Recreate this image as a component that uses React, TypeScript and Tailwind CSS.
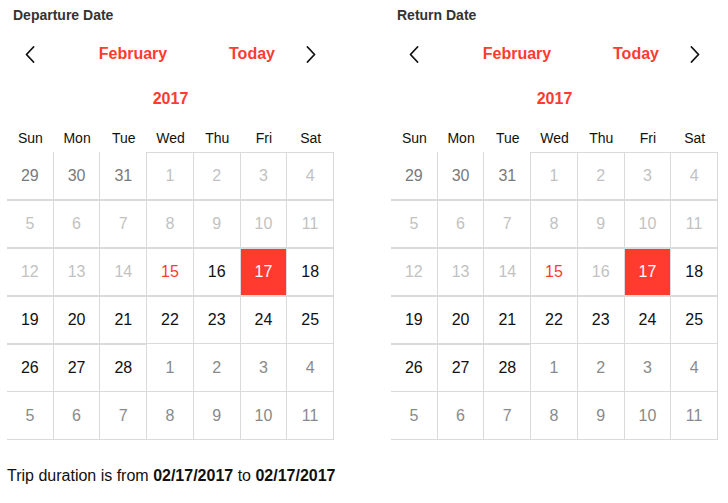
import React from "react";

type Day = { n: number; tone: "prev" | "off" | "on" | "today" | "sel" | "next" };

const toneClass: Record<Day["tone"], string> = {
  prev: "text-[#7a7a7a]",
  off: "text-[#c2c2c2]",
  on: "text-[#111]",
  today: "text-[#ff3b30]",
  sel: "bg-[#ff3b30] text-white",
  next: "text-[#8a8a8a]",
};

const buildDays = (disableSixteen: boolean): Day[] => {
  const days: Day[] = [];
  [29, 30, 31].forEach((n) => days.push({ n, tone: "prev" }));
  for (let n = 1; n <= 28; n++) {
    let tone: Day["tone"] = "on";
    if (n < 15) tone = "off";
    if (n === 15) tone = "today";
    if (n === 16 && disableSixteen) tone = "off";
    if (n === 17) tone = "sel";
    days.push({ n, tone });
  }
  for (let n = 1; n <= 11; n++) days.push({ n, tone: "next" });
  return days;
};

// which cells carry a top border (gives the doubled lines of the original table)
const hasTop = (i: number) => {
  const row = Math.floor(i / 7);
  const col = i % 7;
  if (row === 0) return col >= 3;
  if (row >= 1 && row <= 3) return true;
  if (row === 4) return col <= 2;
  return false;
};

const Chevron = ({ dir }: { dir: "left" | "right" }) => (
  <svg width="10" height="17" viewBox="0 0 10 17" fill="none">
    <polyline
      points={dir === "left" ? "8.5,1 1.5,8.5 8.5,16" : "1.5,1 8.5,8.5 1.5,16"}
      stroke="#111"
      strokeWidth="1.8"
      strokeLinecap="round"
      strokeLinejoin="round"
    />
  </svg>
);

const Calendar = ({ title, disableSixteen }: { title: string; disableSixteen: boolean }) => {
  const days = buildDays(disableSixteen);
  return (
    <div className="w-[327px]">
      <div className="h-[30px] flex items-center pl-[6px] text-[14px] font-bold text-[#333]">{title}</div>
      <div className="mt-[2px] h-[44px] flex items-center">
        <div className="w-[46px] shrink-0 flex justify-center">
          <Chevron dir="left" />
        </div>
        <div className="w-[160px] shrink-0 text-center text-[16px] font-bold text-[#ff3b30]">February</div>
        <div className="w-[78px] shrink-0 text-center text-[16px] font-bold text-[#ff3b30]">Today</div>
        <div className="w-[39px] shrink-0 flex justify-center">
          <Chevron dir="right" />
        </div>
      </div>
      <div className="h-[46px] flex items-center justify-center text-[16px] font-bold text-[#ff3b30]">2017</div>
      <div className="h-[30px] pt-[3px] grid grid-cols-7 items-center text-center text-[14px] text-[#111]">
        {["Sun", "Mon", "Tue", "Wed", "Thu", "Fri", "Sat"].map((d) => (
          <div key={d}>{d}</div>
        ))}
      </div>
      <div className="grid grid-cols-7">
        {days.map((d, i) => (
          <div
            key={i}
            className={`h-[48px] box-border flex items-center justify-center text-[16px] border-r border-b border-[#dadada] ${
              hasTop(i) ? "border-t" : ""
            } ${toneClass[d.tone]}`}
          >
            {d.n}
          </div>
        ))}
      </div>
    </div>
  );
};

export default function App() {
  return (
    <div className="w-[728px] h-[503px] bg-white pl-[7px]" style={{ fontFamily: "'Liberation Sans', Arial, sans-serif" }}>
      <div className="flex gap-[57px]">
        <Calendar title="Departure Date" disableSixteen={false} />
        <Calendar title="Return Date" disableSixteen={true} />
      </div>
      <p className="mt-[26px] text-[16px] leading-[20px] text-[#111]">
        Trip duration is from <b>02/17/2017</b> to <b>02/17/2017</b>
      </p>
    </div>
  );
}
